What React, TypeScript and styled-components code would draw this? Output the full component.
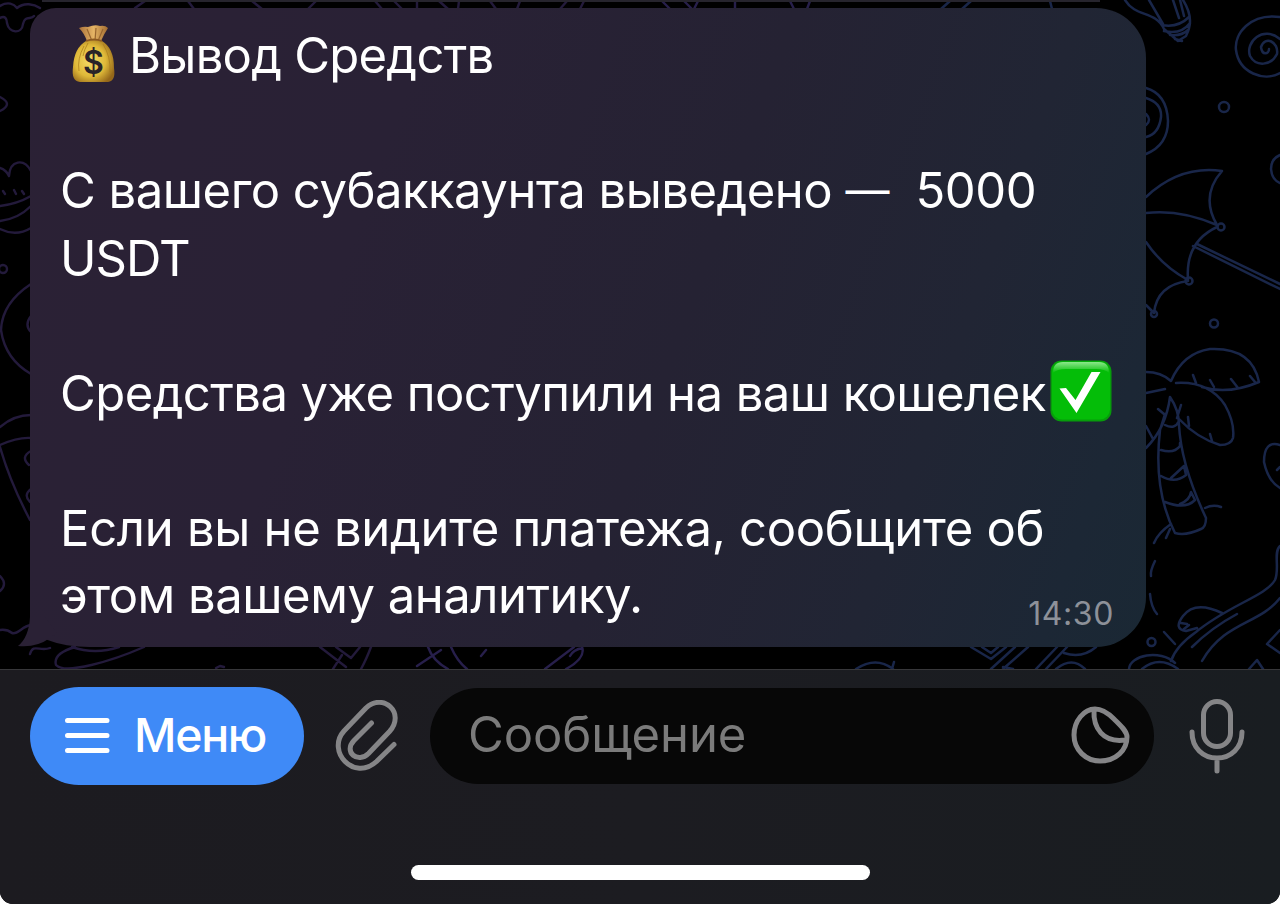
import React from "react";
import styled, { createGlobalStyle } from "styled-components";

const GlobalStyle = createGlobalStyle`
  * { box-sizing: border-box; }
  body { margin: 0; background: #fff; font-family: Inter, "Liberation Sans", sans-serif; }
`;

const Screen = styled.main`
  width: 1280px;
  height: 904px;
  display: flex;
  flex-direction: column;
  overflow: hidden;
  background: #000;
  border-radius: 0 0 13px 13px;
`;

const Chat = styled.section`
  position: relative;
  height: 669px;
  overflow: hidden;
  background: #000;
  padding: 0 134px 22px 30px;
  display: flex;
  flex-direction: column;
  gap: 6px;
`;

const Wallpaper = styled.svg`
  position: absolute;
  inset: 0;
  width: 1280px;
  height: 669px;
  fill: none;
  stroke-linecap: round;
  stroke-linejoin: round;
`;

const PreviousBubble = styled.div`
  position: relative;
  flex: none;
  height: 2px;
  margin: 0 46px 0 12px;
  background: #26242d;
`;

const Bubble = styled.article`
  position: relative;
  flex: none;
  width: 1116px;
  height: 639px;
  padding: 14px 0 0 30px;
  border-radius: 26px 50px 50px 60px / 26px 50px 50px 24px;
  background: linear-gradient(110deg, #2b2135 0%, #292135 30%, #252233 57%, #212534 78%, #1c2735 92%, #1a2834 100%);
  color: #fff;
`;

const Tail = styled.svg`
  position: absolute;
  left: -13px;
  bottom: 0;
  width: 60px;
  height: 30px;
  fill: #2a2135;
`;

const Line = styled.p<{ $tracking?: number }>`
  margin: 0;
  height: 67.5px;
  line-height: 67.5px;
  font-size: 49px;
  letter-spacing: ${(p) => p.$tracking ?? 0}px;
  white-space: pre;
  display: flex;
  align-items: center;
`;

const Dash = styled.span`
  font-size: 44px;
`;

const MoneyBag = styled.svg`
  flex: none;
  width: 48px;
  height: 60px;
  margin: -4px 10px 0 11px;
`;

const CheckMark = styled.svg`
  flex: none;
  width: 62px;
  height: 62px;
  margin: -4px 0 0 4px;
`;

const Time = styled.time`
  position: absolute;
  right: 32px;
  bottom: 13px;
  font-size: 32px;
  line-height: 40px;
  letter-spacing: 0.6px;
  color: #8d9199;
`;

const Footer = styled.footer`
  height: 235px;
  display: flex;
  flex-direction: column;
  align-items: center;
  justify-content: space-between;
  padding-bottom: 24px;
  border-top: 1px solid #37373a;
  background: linear-gradient(90deg, #1c1b20 0%, #1c1c21 50%, #191d21 100%);
`;

const InputRow = styled.div`
  width: 100%;
  height: 115px;
  display: flex;
  align-items: center;
  padding: 17px 30px 0;
`;

const MenuButton = styled.button`
  width: 274px;
  height: 98px;
  flex: none;
  display: flex;
  align-items: center;
  gap: 24px;
  padding: 0 0 2px 35px;
  border: 0;
  border-radius: 49px;
  background: #3f8af7;
  color: #fff;
  font: 500 46.5px/60px Inter, "Liberation Sans", sans-serif;
  letter-spacing: -1.3px;
`;

const Icon = styled.svg<{ $w: number; $h: number }>`
  flex: none;
  width: ${(p) => p.$w}px;
  height: ${(p) => p.$h}px;
  fill: none;
  stroke: ${(p) => p.color ?? "#858587"};
  stroke-width: 5;
  stroke-linecap: round;
  stroke-linejoin: round;
`;

const AttachButton = styled.button`
  flex: none;
  width: 126px;
  display: flex;
  justify-content: center;
  padding: 0 0 1px;
  border: 0;
  background: none;
`;

const MessageField = styled.div`
  flex: none;
  width: 724px;
  height: 96px;
  display: flex;
  align-items: center;
  justify-content: space-between;
  padding: 0 24px 2px 38px;
  border-radius: 48px;
  background: #070707;
`;

const Placeholder = styled.span`
  font-size: 49px;
  line-height: 60px;
  letter-spacing: -0.1px;
  color: #7b7b7b;
`;

const VoiceButton = styled(AttachButton)`
  width: 125px;
`;

const HomeIndicator = styled.div`
  width: 459px;
  height: 15px;
  border-radius: 8px;
  background: #fff;
`;

function Doodles() {
  return (
    <Wallpaper viewBox="0 0 1280 669" aria-hidden="true">
      <g stroke="#231a3b" strokeWidth="2.4">
        <path d="M0 6C8 1 14 4 17 8C24 2 34 4 40 8M0 18C5 15 7 19 7 23C9 34 22 34 23 24C25 15 31 20 34 16M135 8L145 1M188 1L194 9M252 1L262 9M316 1L308 9M375 1L382 9M394 1L402 9M417 1V9M439 1L448 9M459 1L458 9M490 1L496 9M520 1L517 9M567 1L560 9M584 1L580 9" />
        <path d="M0 97Q14 104 0 111M0 168C4 169 8 173 9 176C10 160 24 158 31 171M0 206Q17 204 31 196M0 221Q18 219 31 206M0 229Q16 237 31 228M3 191l2 3M14 190l2 4M22 191l2 3" />
        <circle cx="3" cy="269" r="4" />
        <path d="M31 284Q2 303 1 330Q5 359 31 374M31 316Q24 325 31 332M0 427Q14 415 31 415M0 445Q18 437 31 438M0 447Q10 482 30 520M31 451Q20 457 29 465M31 489Q23 495 30 502M0 576Q8 584 0 591" />
        <path d="M0 630Q7 629 12 633C18 635 22 626 31 625M30 654C33 643 40 652 50 648M144 647C112 661 65 675 56 665C53 655 65 650 75 647M72 647Q95 655 119 647M320 647L346 667M336 647L351 658L360 647M342 655L333 669M371 647Q366 660 361 669M216 668l4-2l4 1" />
      </g>
      <g stroke="#271f4b" strokeWidth="2.4">
        <path d="M662 1L670 9M684 1L692 9M698 1L694 9M735 1V9M790 1L794 9M810 1L807 9" />
        <path d="M428 647Q433 661 448 669M417 666L441 650M451 647Q457 661 467 669M481 656l5-6M545 669L574 647M582 647Q586 658 566 669M582 648Q573 650 570 656" />
      </g>
      <g stroke="#192649" strokeWidth="2.5">
        <path d="M950 1L941 9M971 1L962 9M1050 1L1052 9" />
        <path d="M1125 0C1136 18 1155 10 1164 29L1178 41L1186 36Q1190 28 1190 21Q1190 11 1183 0M1149 0L1163 24M1173 0L1179 18M1180 0L1184 16M1162 25Q1178 28 1189 17M1164 31Q1181 35 1190 23M1170 35Q1182 36 1188 30M1175 39L1182 41" />
        <path d="M1280 17C1250 13 1234 34 1236 50C1239 73 1264 82 1280 73M1280 39C1263 25 1245 42 1250 56C1256 67 1271 66 1277 54C1279 42 1265 35 1261 47C1262 56 1269 54 1269 49" />
        <circle cx="1224" cy="107" r="5" />
        <path d="M1146 88Q1167 94 1168 121Q1168 145 1146 154M1146 98Q1162 103 1161 117Q1159 134 1146 137M1146 114Q1152 120 1146 125M1280 155Q1271 159 1271 169Q1272 180 1280 183" />
        <path d="M1146 197Q1180 165 1222 171Q1200 196 1217 225Q1180 209 1146 213M1217 227Q1185 242 1188 280Q1162 266 1146 242M1188 281Q1157 285 1154 313L1146 305M1193 246L1280 289M1197 244L1280 284" />
        <circle cx="1221" cy="227" r="3.5" /><circle cx="1189" cy="281" r="3.5" /><circle cx="1154" cy="314" r="3" /><circle cx="1214" cy="323.5" r="4" />
        <path d="M1146 372Q1161 372 1171 381Q1183 353 1210 349Q1252 347 1259 382Q1228 395 1202 387M1176 383Q1209 381 1225 405Q1235 423 1233 438Q1231 445 1220 445Q1197 438 1179 419M1146 393L1165 389M1193 375l3 8M1210 380l4 7M1231 379l7 9M1250 376l5 6M1188 417l1 9M1210 434l2 7M1158 409l6 5M1181 405L1177 418M1146 426l7 13M1146 448Q1166 428 1170 397Q1179 410 1179 425Q1181 465 1206 518Q1206 527 1201 529Q1186 536 1175 533Q1153 490 1160 430L1165 414M1165 425Q1175 430 1179 421M1161 450Q1174 454 1180 446L1180 443M1161 476Q1175 484 1186 475L1184 466L1171 478M1165 502Q1185 510 1195 500L1191 492Q1190 500 1180 504M1171 524Q1158 533 1154 543M1170 529L1166 538M1205 508Q1213 504 1221 507" />
        <path d="M1155 561Q1150 571 1151 576M1150 594Q1151 607 1157 614M1164 632l11 12" />
        <circle cx="1151.5" cy="642" r="4" />
        <path d="M1280 445Q1264 440 1264 462Q1268 481 1280 488M1277 470l3-3M1280 546C1273 552 1280 569 1275 580C1266 596 1229 605 1196 632Q1176 646 1171 661M1237 614Q1211 628 1192 647M1280 598C1259 625 1225 621 1202 661M1222 613Q1195 600 1183 616Q1173 629 1186 631L1197 628M1181 623l6 1M1184 629l5-4M1280 630L1267 644L1280 653" />
        <path d="M1129 669C1130 655 1160 649 1175 663M1142 669Q1159 655 1178 669M1249 669L1257 660L1263 669M971 647L991 659L1006 647M982 647L991 653L998 647M1003 669L1028 647M991 669L1015 647M1003 667l10 2M1036 669L1057 647M1046 669L1067 647M1056 669Q1072 656 1085 669M1064 653Q1082 659 1096 647M856 669Q876 656 893 669M894 662l-2 7" />
      </g>
    </Wallpaper>
  );
}

function MoneyBagIcon() {
  return (
    <MoneyBag viewBox="0 0 48 60" aria-hidden="true">
      <defs>
        <radialGradient id="sack" cx="42%" cy="50%" r="62%">
          <stop offset="0" stopColor="#f5dc68" /><stop offset=".6" stopColor="#dfb838" /><stop offset="1" stopColor="#95681a" />
        </radialGradient>
        <linearGradient id="neck">
          <stop offset="0" stopColor="#a9713a" /><stop offset=".5" stopColor="#e5b465" /><stop offset="1" stopColor="#a16b30" />
        </linearGradient>
      </defs>
      <path d="M8 4Q13 2 17 3Q24 0 29 2Q34 1 37 4Q33 10 30 17L16 17Q13 9 8 4Z" fill="url(#neck)" />
      <path d="M16 5l5 12M25 4l-1 13M32 5l-5 12" stroke="#98662f" strokeWidth="1.2" fill="none" />
      <path d="M15 17Q23 14 31 17Q43 24 43 44Q45 57 37 58H9Q0 57 2 43Q3 24 15 17Z" fill="url(#sack)" />
      <path d="M13 22Q6 35 8 47M32 20Q40 33 39 48M17 19Q13 26 12 32" stroke="#a77919" strokeWidth="1" fill="none" opacity=".7" />
      <path d="M15 17Q23 14 31 17" stroke="#8c5921" strokeWidth="1.8" fill="none" />
      <text x="22.5" y="50" textAnchor="middle" fontFamily="Inter, sans-serif" fontSize="32" letterSpacing="0" fontWeight="600" fill="#2a2328">$</text>
    </MoneyBag>
  );
}

function CheckMarkIcon() {
  return (
    <CheckMark viewBox="0 0 62 62" aria-hidden="true">
      <defs>
        <linearGradient id="shine" x2="0" y2="1">
          <stop offset="0" stopColor="#8be88a" /><stop offset="1" stopColor="#04bd08" />
        </linearGradient>
      </defs>
      <rect x=".5" y=".5" width="61" height="61" rx="11" fill="#079d0b" />
      <rect x="2" y="1.5" width="58" height="58" rx="10" fill="#04bd08" />
      <path d="M3 13Q3 2 13 2H49Q59 2 59 13Q55 9 46 9H16Q7 9 3 13Z" fill="url(#shine)" />
      <path d="M9.5 28.5L16 28L25.5 40L41.5 12H50.5L26.5 53Z" fill="#fff" />
    </CheckMark>
  );
}

export default function App() {
  return (
    <>
      <GlobalStyle />
      <Screen>
        <Chat>
          <Doodles />
          <PreviousBubble />
          <Bubble>
            <Tail viewBox="0 20 60 30"><path d="M13 20Q12 40 1 49Q19 51 33 41L40 36L28 20Z" /></Tail>
            <Line $tracking={-0.75}><MoneyBagIcon />Вывод Средств</Line>
            <Line />
            <Line $tracking={-0.5}>С вашего субаккаунта выведено <Dash>—</Dash>{"  5000"}</Line>
            <Line $tracking={-0.9}>USDT</Line>
            <Line />
            <Line $tracking={-0.57}>Средства уже поступили на ваш кошелек<CheckMarkIcon /></Line>
            <Line />
            <Line $tracking={-0.3}>Если вы не видите платежа, сообщите об</Line>
            <Line $tracking={-0.5}>этом вашему аналитику.</Line>
            <Time>14:30</Time>
          </Bubble>
        </Chat>
        <Footer>
          <InputRow>
            <MenuButton>
              <Icon $w={45} $h={37} color="#fff" viewBox="0 0 45 37"><path d="M2.5 3.5h39.5M2.5 18.5h39.5M2.5 33.5h39.5" /></Icon>
              Меню
            </MenuButton>
            <AttachButton aria-label="Прикрепить">
              <Icon $w={64} $h={72} viewBox="0 0 64 72"><path d="M36.5 23L19 40.5C8 52 23 64 33.5 53.5L54.5 31.5C71 13 48-8 31 8L9 31C-9 51 19 82 41.5 61.5L59 44.5" /></Icon>
            </AttachButton>
            <MessageField>
              <Placeholder>Сообщение</Placeholder>
              <Icon $w={60} $h={60} viewBox="0 0 60 60"><path d="M25 4C14 4 4 16 4 30C4 45 16 56 30 56C46 56 57 45 57 32C57 26 50 20 44 14C37 7 32 4 25 4ZM24 5C23 23 33 38 55 35" /></Icon>
            </MessageField>
            <VoiceButton aria-label="Голосовое сообщение">
              <Icon $w={58} $h={76} viewBox="0 0 58 76"><rect x="15.5" y="3.5" width="27" height="45" rx="13.5" /><path d="M4 34C4 50 15 60 29 60S54 50 54 34M29 60V73" /></Icon>
            </VoiceButton>
          </InputRow>
          <HomeIndicator />
        </Footer>
      </Screen>
    </>
  );
}
